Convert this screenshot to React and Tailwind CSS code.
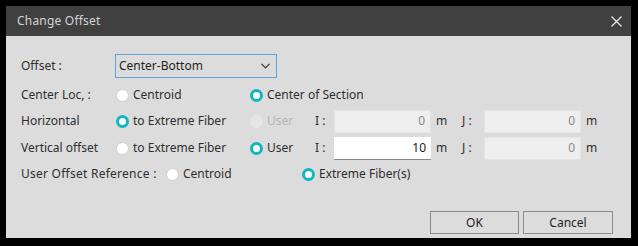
import React from 'react';

const Radio = ({ checked, disabled }) => {
  if (checked) {
    return <span className="w-[13px] h-[13px] rounded-full border-[3px] border-[#12b5c4] bg-white shrink-0" />;
  }
  return (
    <span
      className={
        disabled
          ? 'w-[13px] h-[13px] rounded-full bg-[#e6e6e6] shrink-0'
          : 'w-[13px] h-[13px] rounded-full bg-white border border-[#d0d0d0] shrink-0'
      }
    />
  );
};

const Option = ({ checked, disabled, label, width }) => (
  <div className={`flex items-center gap-[4px] ${width}`}>
    <Radio checked={checked} disabled={disabled} />
    <span className={disabled ? 'text-[#b4b4b4]' : ''}>{label}</span>
  </div>
);

const NumBox = ({ value, active }) => (
  <div
    className={
      active
        ? 'w-[97px] h-[23px] bg-white border-b border-[#8a8a8a] flex items-center justify-end pr-[5px] text-[#222]'
        : 'w-[97px] h-[23px] bg-[#eeeeee] border border-[#e4e4e4] flex items-center justify-end pr-[5px] text-[#8a8a8a]'
    }
  >
    {value}
  </div>
);

const OffsetRow = ({ label, opt1, opt2, iVal, iActive }) => (
  <div className="flex items-center h-[26px]">
    <div className="w-[95px]">{label}</div>
    <Option width="w-[134px]" checked={opt1.checked} label={opt1.label} />
    <Option width="w-[65px]" checked={opt2.checked} disabled={opt2.disabled} label="User" />
    <div className="w-[19px]">I :</div>
    <NumBox value={iVal} active={iActive} />
    <div className="w-[31px] pl-[5px]">m</div>
    <div className="w-[22px]">J :</div>
    <NumBox value="0" />
    <div className="pl-[5px]">m</div>
  </div>
);

const App = () => {
  return (
    <div
      className="w-[638px] h-[246px] bg-black pt-[6px] pl-[6px] text-[12px] text-[#2e2e2e]"
      style={{ fontFamily: '"Noto Sans", "Open Sans", sans-serif' }}
    >
      <div className="w-[625px] h-[232px] bg-[#dcdcdc] flex flex-col">
        <div className="h-[30px] bg-[#404040] flex items-center justify-between pl-[11px] pr-[9px]">
          <span className="text-[12px] text-[#d4d4d4] tracking-[0.2px]">Change Offset</span>
          <svg width="11" height="11" viewBox="0 0 11 11">
            <path d="M0.5 0.5 L10.5 10.5 M10.5 0.5 L0.5 10.5" stroke="#e8e8e8" strokeWidth="1.3" />
          </svg>
        </div>

        <div className="pl-[15px] pt-[17px] flex flex-col">
          <div className="flex items-center h-[26px]">
            <div className="w-[94px]">Offset :</div>
            <div className="w-[162px] h-[24px] border border-[#5aa5dc] flex items-center justify-between pl-[3px] pr-[6px] text-[#1e1e1e]">
              <span>Center-Bottom</span>
              <svg width="9" height="6" viewBox="0 0 9 6">
                <path d="M0.5 0.8 L4.5 4.8 L8.5 0.8" fill="none" stroke="#333" strokeWidth="1.2" />
              </svg>
            </div>
          </div>

          <div className="flex items-center h-[26px] mt-[3px]">
            <div className="w-[95px]">Center Loc, :</div>
            <Option width="w-[134px]" label="Centroid" />
            <Option checked label="Center of Section" />
          </div>

          <OffsetRow
            label="Horizontal"
            opt1={{ checked: true, label: 'to Extreme Fiber' }}
            opt2={{ disabled: true }}
            iVal="0"
          />
          <div className="mt-[1px]">
            <OffsetRow
              label="Vertical offset"
              opt1={{ label: 'to Extreme Fiber' }}
              opt2={{ checked: true }}
              iVal="10"
              iActive
            />
          </div>

          <div className="flex items-center h-[26px]">
            <div className="w-[145px] tracking-[0.25px]">User Offset Reference :</div>
            <Option width="w-[136px]" label="Centroid" />
            <Option checked label="Extreme Fiber(s)" />
          </div>
        </div>

        <div className="flex justify-end gap-[4px] pr-[18px] mt-[24px]">
          <button className="w-[89px] h-[23px] border border-[#8c8c8c] text-[#1e1e1e]">OK</button>
          <button className="w-[90px] h-[23px] border border-[#8c8c8c] text-[#1e1e1e]">Cancel</button>
        </div>
      </div>
    </div>
  );
};

export default App;
